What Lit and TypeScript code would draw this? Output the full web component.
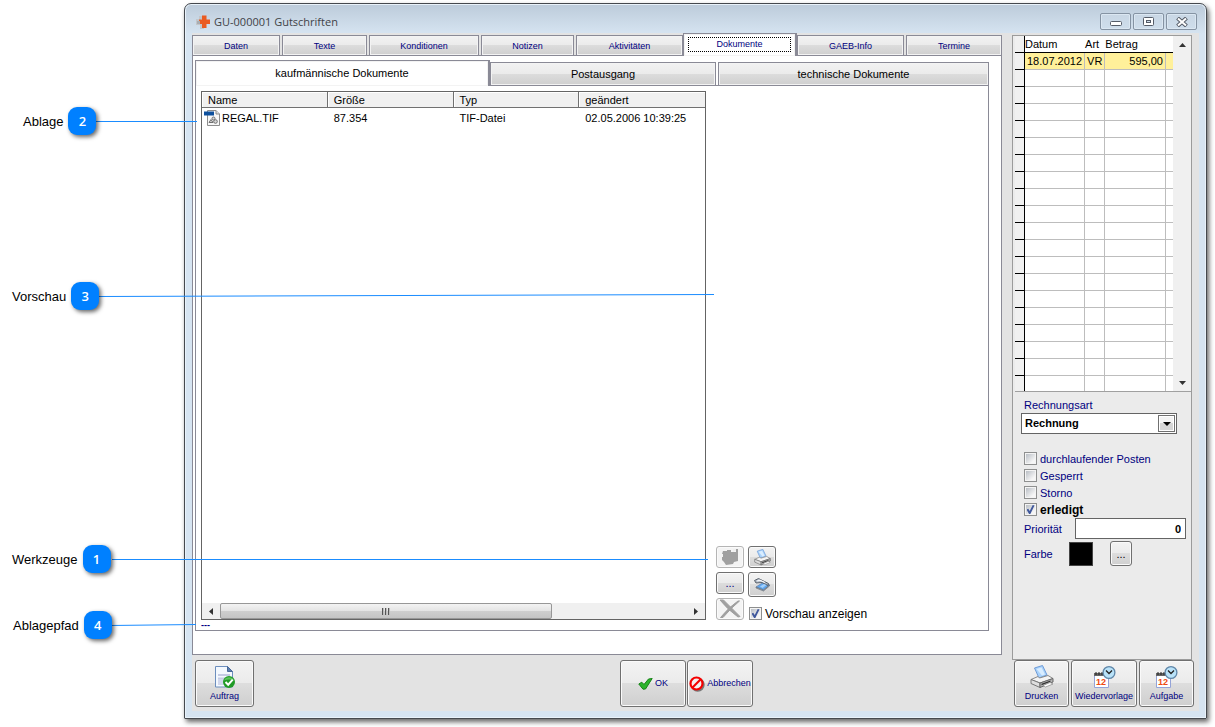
import { LitElement, html, css, svg } from "lit";
import { customElement, state } from "lit/decorators.js";
import { classMap } from "lit/directives/class-map.js";

const logoIcon = html`<svg class="logo" width="16" height="16" viewBox="0 0 16 16" aria-hidden="true">
  <path d="M4 2h5v3H4zM1 5h5v6H1zM5 10h4v5H5z" fill="#c3c6ca" />
  <path d="M7 1.500h4.500v4H15V10h-3.500v4H7v-4H4V5.500h3z" fill="#ea5b22" />
  <path d="M2 7h3v3H2z" fill="#a9adb3" />
</svg>`;

const tifIcon = html`<svg width="16" height="16" viewBox="0 0 16 16" aria-hidden="true">
  <path d="M3.500 .5h8.500l3.500 3.500v11.500h-12z" fill="#f7f7f7" stroke="#8d8d8d" />
  <path d="M12 .5v3.500h3.500" fill="#ddd" stroke="#8d8d8d" />
  <path d="M0 1.500h10v4H0z" fill="#0d4f9c" />
  <g fill="#d6d6d6" stroke="#6e6e6e">
    <path d="M5 12.500l2-3 2 3z" /><circle cx="9.500" cy="8.500" r="1.500" /><circle cx="11.500" cy="11.500" r="1.800" />
  </g>
</svg>`;

const printerShape = svg`
  <path d="M4.500 3l8-2.500 4.500 9.500-8 3z" fill="#a9d2fb" stroke="#6f9bd6" />
  <path d="M6.500 4l5-1.500 3.500 7-3 1z" fill="#d9edff" />
  <path d="M1 14.500l7-3 1.500 1.500 8.500-2.500 5 3-13 4.500z" fill="#f4f4f4" stroke="#8a8a8a" />
  <path d="M1 14.500l9 3.500v4.500l-9-4z" fill="#dedede" stroke="#777" />
  <path d="M10 18l13-4.500v3.500l-13 5.500z" fill="#b5b5b5" stroke="#666" />
  <path d="M11.500 18.700l9-3.200v1.200l-9 3.500z" fill="#333" />
  <path d="M13 20.500l7-3 3 1.500-7.500 3z" fill="#fff" stroke="#888" stroke-width=".7" />`;

const printerIcon = (size: number) =>
  html`<svg width=${size} height=${size} viewBox="0 0 24 24" aria-hidden="true">${printerShape}</svg>`;

const scannerIcon = html`<svg width="18" height="16" viewBox="0 0 18 16" aria-hidden="true">
  <path d="M3 10l7-4.500 6.500 2.500-6 5z" fill="#5ea6ee" stroke="#6e87ad" stroke-width=".8" />
  <path d="M3 10v1l7.500 3 6-5V8l-6 5z" fill="#aab4c0" stroke="#5d6570" stroke-width=".6" />
  <path d="M1.500 3.500l4-2 10 5-.500 2L9 5.500 3 6z" fill="#b4bcc6" stroke="#4c5560" stroke-width=".9" />
  <path d="M4 4l3-.800 5 2.300" fill="none" stroke="#f5f8fc" stroke-width="1.200" />
  <path d="M7 9.500l4-2.500 2.500 1-4 3z" fill="#a5d0fb" />
</svg>`;

const stampIcon = html`<svg width="20" height="18" viewBox="0 0 20 18" aria-hidden="true">
  <path d="M3 3h4v-1h4v2h5V1h2v12l-4 1-1 2-7 1-2-3-2-2V9h1V6H2z" fill="#a0a0a0" /><path d="M13 1h3v2h-2v1h-1z" fill="#f0f0f0" />
</svg>`;

const crossIcon = html`<svg width="22" height="20" viewBox="0 0 22 20" aria-hidden="true">
  <path d="M1 1h3.500q7 7 16.500 16.500l-2 .500Q8 10 1 1zM19 2h1.500Q12 9 4 18.500H1.500Q10 8 19 2z" fill="#a0a0a0" stroke="#a0a0a0" />
</svg>`;

const orderIcon = html`<svg width="22" height="24" viewBox="0 0 22 24" aria-hidden="true">
  <path d="M1.500 1.500h12l5 5v15.500h-17z" fill="#f3f8fe" stroke="#6c8ebd" />
  <path d="M13.500 1.500v5h5z" fill="#5d80b0" stroke="#48699a" />
  <path d="M4 9h12v2H4zM4 12.500h12v1.500H4z" fill="#c4cbe4" /><path d="M4 14h6v6H4z" fill="#d1d7ec" />
  <circle cx="15" cy="17" r="6" fill="#1f9a25" /><path d="M10 15.500a5.500 5.500 0 0 1 10 0q-5-2-10 0z" fill="#5bc45c" />
  <path d="M11.500 17l2.700 2.700 4.500-5" fill="none" stroke="#fff" stroke-width="2" />
</svg>`;

const okIcon = html`<svg width="15" height="12" viewBox="0 0 15 12" aria-hidden="true">
  <path d="M.800 6l3-1.800L6 6.500 10.500 1l3.700-.500L7.500 11 5 11.200z" fill="#2cb42c" stroke="#178317" />
</svg>`;

const cancelIcon = html`<svg width="16" height="16" viewBox="0 0 16 16" aria-hidden="true">
  <circle cx="8.700" cy="8.700" r="6" fill="none" stroke="#777" stroke-width="2" />
  <circle cx="7.500" cy="7.500" r="6" fill="#f4eeee" stroke="#f40000" stroke-width="2.200" />
  <path d="M3.500 11.500l8-8" stroke="#f40000" stroke-width="2.200" />
</svg>`;

const reminderIcon = html`<svg width="23" height="24" viewBox="0 0 23 24" aria-hidden="true">
  <path d="M1.500 9.500h14v13h-14z" fill="#fff" stroke="#94a3d8" />
  <path d="M1 8h15v3H1z" fill="#666" /><path d="M3 7v3M6 7v3M9 7v3M12 7v3" stroke="#222" />
  <text x="3" y="19.500" class="day">12</text>
  <circle cx="16" cy="7.500" r="5.900" fill="#b9e2f8" stroke="#5f86a8" stroke-width="1.300" />
  <path d="M13 5.500l3 3 3-3" fill="none" stroke="#222" stroke-width="1.300" />
</svg>`;

interface Tab {
  id: string;
  label: string;
}

const mainTabs: Tab[] = [
  { id: "daten", label: "Daten" },
  { id: "texte", label: "Texte" },
  { id: "konditionen", label: "Konditionen" },
  { id: "notizen", label: "Notizen" },
  { id: "aktivitaeten", label: "Aktivitäten" },
  { id: "dokumente", label: "Dokumente" },
  { id: "gaeb", label: "GAEB-Info" },
  { id: "termine", label: "Termine" },
];

const subTabs: Tab[] = [
  { id: "kauf", label: "kaufmännische Dokumente" },
  { id: "post", label: "Postausgang" },
  { id: "tech", label: "technische Dokumente" },
];

const base = css`
  :host {
    display: block;
    box-sizing: border-box;
    font-family: "Liberation Sans", Arial, sans-serif;
    font-size: 11px;
  }
  *, *::before, *::after { box-sizing: border-box; }
  button, input, select { font: inherit; margin: 0; }
  svg { display: block; flex: none; }
  .btn {
    display: flex;
    align-items: center;
    justify-content: center;
    padding: 0;
    border: 1px solid #707070;
    border-radius: 3px;
    color: navy;
    background: linear-gradient(#f3f3f3, #ebebeb 48%, #dddddd 50%, #cfcfcf);
    box-shadow: inset 0 0 0 1px #fafafa;
  }
  .check { display: flex; align-items: center; gap: 3px; }
  .check input {
    appearance: none;
    flex: none;
    width: 13px;
    height: 13px;
    border: 1px solid #8e8f8f;
    padding: 1px;
    background: linear-gradient(135deg, #b9bec5, #f6f6f6 80%) content-box, #f4f4f4;
    display: grid;
    place-items: center;
  }
  .check input:checked::after {
    content: "";
    width: 8px;
    height: 9px;
    background: #40589c;
    clip-path: polygon(0 50%, 22% 42%, 40% 66%, 78% 0, 100% 6%, 48% 100%, 32% 100%);
  }
`;

@customElement("document-list")
class DocumentList extends LitElement {
  static styles = [
    base,
    css`
      :host {
        display: flex;
        flex-direction: column;
        border: 1px solid #646464;
        background: #fff;
        min-width: 0;
      }
      .files { width: 100%; border-collapse: separate; border-spacing: 0; table-layout: fixed; }
      th {
        height: 16px;
        padding: 0 6px;
        font-weight: normal;
        text-align: left;
        background: #f0f0f0;
        border-right: 1px solid #707070;
        border-bottom: 1px solid #707070;
        box-shadow: inset 1px 1px #fff;
      }
      th:last-child { border-right: 0; }
      td { height: 19px; padding: 0 6px; white-space: nowrap; }
      td:first-child { padding-left: 2px; }
      .file { display: flex; align-items: center; gap: 2px; }
      .space { flex: 1; }
      .bar { display: grid; grid-template-columns: 18px 1fr 18px; height: 16px; background: #f0f0f0; }
      .arrow { border: 0; padding: 0; background: none; display: grid; place-items: center; }
      .thumb {
        width: 71%;
        border: 1px solid #979797;
        border-radius: 2px;
        background: linear-gradient(#f3f3f3, #e4e4e4 48%, #cfcfcf 50%, #c4c4c4);
        display: flex;
        justify-content: center;
        align-items: center;
        gap: 1px;
      }
      .grip { width: 2px; height: 7px; border-left: 1px solid #555; background: #bbb; }
    `,
  ];
  render() {
    return html`
      <table class="files">
        <thead><tr><th>Name</th><th>Größe</th><th>Typ</th><th>geändert</th></tr></thead>
        <tbody>
          <tr><td><span class="file">${tifIcon}REGAL.TIF</span></td><td>87.354</td><td>TIF-Datei</td><td>02.05.2006 10:39:25</td></tr>
        </tbody>
      </table>
      <div class="space"></div>
      <div class="bar">
        <button class="arrow" aria-label="nach links"><svg width="4" height="7" viewBox="0 0 4 7"><path d="M4 0v7L0 3.500z" fill="#333" /></svg></button>
        <div class="thumb"><i class="grip"></i><i class="grip"></i><i class="grip"></i></div>
        <button class="arrow" aria-label="nach rechts"><svg width="4" height="7" viewBox="0 0 4 7"><path d="M0 0v7l4-3.500z" fill="#333" /></svg></button>
      </div>
    `;
  }
}

@customElement("side-panel")
class SidePanel extends LitElement {
  static styles = [
    base,
    css`
      :host { border: 1px solid #9b9b9b; background: #ebebeb; padding: 0 0 0 2px; color: navy; }
      .ledger { display: flex; background: #fff; border-bottom: 1px solid #a0a0a0; }
      .grid { flex: 1; border-collapse: separate; border-spacing: 0; table-layout: fixed; color: #000; }
      .mark { width: 10px; }
      .date { width: 59px; }
      .kind { width: 20px; }
      .rest { width: 7px; }
      th, td { height: 17px; padding: 0; white-space: nowrap; line-height: 14px; }
      th { font-weight: normal; text-align: left; border-bottom: 1px solid #000; }
      td { border-right: 1px solid #bdbdbd; border-bottom: 1px solid #bdbdbd; }
      td:last-child { border-right: 0; }
      th:first-child, td:first-child {
        background: #f0f0f0;
        border-right: 1px solid #000;
        border-bottom: 1px solid #000;
      }
      tbody tr:last-child td { border-bottom: 0; height: 15px; }
      .filled td + td { background: #fff09a; padding: 0 2px; }
      .filled td:nth-child(4) { text-align: right; }
      .scroll {
        width: 18px;
        background: #f0f0f0;
        display: flex;
        flex-direction: column;
        justify-content: space-between;
      }
      .scroll button { border: 0; padding: 0; height: 17px; background: none; display: grid; place-items: center; }
      .form { padding: 7px 5px 0 6px; }
      .caption { display: block; line-height: 13px; padding-left: 3px; }
      .pick { position: relative; width: 156px; margin-top: 1px; }
      .pick select {
        appearance: none;
        display: block;
        width: 100%;
        height: 21px;
        border: 1px solid #646464;
        border-radius: 0;
        padding: 0 3px 2px;
        background: #fff;
        font-weight: bold;
        color: #000;
      }
      .drop {
        position: absolute;
        top: 2px;
        right: 2px;
        width: 17px;
        height: 17px;
        border: 1px solid #707070;
        box-shadow: inset 0 0 0 1px #fff;
        background: linear-gradient(#f3f3f3 50%, #d5d5d5 50%);
        display: grid;
        place-items: center;
        pointer-events: none;
      }
      .checks { margin: 16px 0 0 3px; }
      .checks .check { height: 17px; }
      .strong { font-size: 12px; font-weight: bold; color: #000; }
      .row { display: flex; align-items: center; padding-left: 3px; }
      .row label { width: 51px; }
      .row input {
        flex: 1;
        min-width: 0;
        height: 21px;
        border: 1px solid #646464;
        padding: 0 4px;
        text-align: right;
        font-weight: bold;
      }
      .color { margin-top: 2px; }
      .color .name { width: 45px; }
      .swatch { width: 24px; height: 24px; border: 1px solid #444; background: #000; margin-right: 17px; }
      .more { width: 22px; height: 25px; color: #000; }
    `,
  ];
  render() {
    const empty = Array.from({ length: 19 });
    return html`
      <div class="ledger">
        <table class="grid">
          <colgroup><col class="mark" /><col class="date" /><col class="kind" /><col /><col class="rest" /></colgroup>
          <thead><tr><th></th><th>Datum</th><th>Art</th><th>Betrag</th><th></th></tr></thead>
          <tbody>
            <tr class="filled"><td></td><td>18.07.2012</td><td>VR</td><td>595,00</td><td></td></tr>
            ${empty.map(() => html`<tr><td></td><td></td><td></td><td></td><td></td></tr>`)}
          </tbody>
        </table>
        <div class="scroll">
          <button aria-label="nach oben"><svg width="7" height="4" viewBox="0 0 7 4"><path d="M0 4h7L3.500 0z" fill="#333" /></svg></button>
          <button aria-label="nach unten"><svg width="7" height="4" viewBox="0 0 7 4"><path d="M0 0h7L3.500 4z" fill="#333" /></svg></button>
        </div>
      </div>
      <div class="form">
        <label class="caption" for="kind">Rechnungsart</label>
        <div class="pick">
          <select id="kind"><option>Rechnung</option></select>
          <span class="drop"><svg width="8" height="4" viewBox="0 0 8 4"><path d="M0 0h8L4 4z" /></svg></span>
        </div>
        <div class="checks">
          <label class="check"><input type="checkbox" />durchlaufender Posten</label>
          <label class="check"><input type="checkbox" />Gesperrt</label>
          <label class="check"><input type="checkbox" />Storno</label>
          <label class="check strong"><input type="checkbox" checked />erledigt</label>
        </div>
        <div class="row"><label for="prio">Priorität</label><input id="prio" value="0" /></div>
        <div class="row color">
          <label class="name" for="farbe">Farbe</label><span class="swatch"></span>
          <button class="btn more" id="farbe">...</button>
        </div>
      </div>
    `;
  }
}

@customElement("app-root")
class AppRoot extends LitElement {
  @state() tab = "dokumente";
  @state() sub = "kauf";

  static styles = [
    base,
    css`
      :host { position: relative; min-height: 100vh; padding: 3px 8px 8px 184px; background: #fff; display: flex; }
      .window {
        flex: 1;
        min-width: 0;
        display: flex;
        flex-direction: column;
        border: 1px solid #45494e;
        border-radius: 7px 7px 1px 1px;
        padding: 0 7px 7px;
        background: linear-gradient(#bccbda, #d6e4f1 30px);
        box-shadow: inset 0 0 0 1px #e9f2fa, 2px 3px 5px rgba(0, 0, 0, 0.6);
      }
      .titlebar { height: 29px; display: flex; align-items: center; gap: 3px; padding: 6px 2px 0 3px; }
      .title { flex: 1; margin: 0; font: 11px "Open Sans", "Noto Sans", sans-serif; color: #3f4247; }
      .controls { display: flex; gap: 2px; }
      .controls button {
        width: 31px;
        height: 17px;
        padding: 0;
        display: grid;
        place-items: center;
        border: 1px solid #8593a3;
        border-radius: 2px;
        background: linear-gradient(#c8d6e4, #cfdeec);
        box-shadow: inset 0 0 0 1px #dbe7f2;
      }
      .client { flex: 1; display: grid; grid-template-columns: minmax(0, 1fr) 187px; column-gap: 10px; background: #e3e3e3; }
      .main, .side { display: flex; flex-direction: column; min-width: 0; }
      .tabs {
        display: grid;
        align-items: end;
        column-gap: 2px;
        height: 22px;
        grid-template-columns: 88fr 85fr 110fr 93fr 107fr 110fr 107fr 96fr;
      }
      .tab {
        height: 20px;
        padding: 0;
        border: 1px solid #8a8a96;
        border-bottom: 0;
        border-radius: 0;
        font-size: 9px;
        color: navy;
        background: linear-gradient(#f2f2f2, #ebebeb 48%, #dcdcdc 50%, #cfcfcf);
        box-shadow: inset 0 0 0 1px #f3f3f3;
      }
      .tab.active {
        position: relative;
        z-index: 1;
        height: 23px;
        margin: 0 -2px -1px;
        padding: 3px 4px 4px;
        background: #fff;
        border-width: 1px 2px 0 1px;
      }
      .focus { display: block; height: 15px; line-height: 13px; border: 1px dotted #000; }
      .page {
        flex: 1;
        display: flex;
        flex-direction: column;
        border: 1px solid #8a8a96;
        background: #fff;
        padding: 4px 12px 23px 2px;
        margin-bottom: 1px;
      }
      .subtabs {
        display: grid;
        align-items: end;
        height: 25px;
        column-gap: 2px;
        grid-template-columns: 293fr 226fr 271fr;
      }
      .subtabs .tab { height: 23px; font-size: 11px; color: #000; }
      .subtabs .tab.active { height: 26px; margin: 0 -2px -1px 0; padding: 0 0 2px; }
      .sheet {
        flex: 1;
        border: 1px solid #8a8a96;
        padding: 5px 0 0 5px;
        display: grid;
        grid-template-columns: minmax(0, 505fr) minmax(0, 272fr);
        grid-template-rows: 1fr 10px;
        column-gap: 10px;
      }
      .path { color: navy; line-height: 11px; font-size: 9px; font-weight: bold; }
      .preview { display: flex; flex-direction: column; justify-content: flex-end; }
      .tools { display: grid; grid-template-columns: 28px auto; gap: 4px; grid-auto-rows: 22px; justify-content: start; }
      .tool { width: 28px; height: 22px; }
      .tool.tall { height: 25px; }
      .tool:disabled { border-color: #b5b5b5; background: #f4f4f4; }
      .show { font-size: 12px; padding: 9px 0 0 1px; }
      .footer { display: flex; padding: 4px 0 4px 3px; }
      .gap-a { flex: 366; }
      .gap-b { flex: 249; }
      .big { height: 47px; font-size: 9px; line-height: 11px; }
      .stack { flex-direction: column; gap: 2px; }
      .order { width: 59px; }
      .pair { display: flex; gap: 1px; }
      .pair .big { width: 66px; gap: 2px; }
      .side-body { flex: 1; margin: 2px 7px 0 0; }
      .actions { display: grid; grid-template-columns: 55fr 66fr 55fr; gap: 2px; padding: 0 5px 4px 2px; }
      .day { font: bold 9px "Liberation Sans", sans-serif; fill: #ee4a12; }
      .callouts { position: absolute; inset: 0; pointer-events: none; font-size: 13px; }
      .callouts svg { position: absolute; left: 0; top: 0; width: 100%; height: 100%; }
      .callout { position: absolute; display: flex; align-items: center; gap: 5px; height: 28px; }
      .c1 { left: 12px; top: 545px; }
      .c2 { left: 23px; top: 107px; }
      .c3 { left: 12px; top: 282px; }
      .c4 { left: 13px; top: 611px; }
      .num {
        width: 28px;
        height: 28px;
        border-radius: 9px;
        background: #0080ff;
        color: #fff;
        font: 600 13px/28px "Open Sans", "Noto Sans", sans-serif;
        text-align: center;
        box-shadow: 2px 2px 4px rgba(0, 0, 0, 0.6);
      }
    `,
  ];

  renderTab(t: Tab, active: string, pick: (id: string) => void, focus = false) {
    const on = t.id === active;
    return html`<button role="tab" aria-selected=${on} class=${classMap({ tab: true, active: on })} @click=${() => pick(t.id)}>
      ${on && focus ? html`<span class="focus">${t.label}</span>` : t.label}
    </button>`;
  }

  render() {
    return html`
      <div class="window">
        <header class="titlebar">
          ${logoIcon}
          <h1 class="title">GU-000001 Gutschriften</h1>
          <div class="controls">
            <button aria-label="Minimieren"><svg width="12" height="11" viewBox="0 0 12 11"><rect x=".5" y="5.500" width="11" height="4" rx="1" fill="#fff" stroke="#555c68" /></svg></button>
            <button aria-label="Maximieren"><svg width="11" height="9" viewBox="0 0 11 9"><rect x=".5" y=".5" width="10" height="8" rx="1" fill="#fff" stroke="#555c68" /><rect x="3.500" y="3.500" width="4" height="2" fill="#cfdeec" stroke="#555c68" /></svg></button>
            <button aria-label="Schließen"><svg width="12" height="10" viewBox="0 0 12 10"><path d="M1.500 1l9 8M10.500 1l-9 8" stroke="#555c68" stroke-width="4" /><path d="M2 1.400l8 7.200M10 1.400L2 8.600" stroke="#fff" stroke-width="2" /></svg></button>
          </div>
        </header>
        <div class="client">
          <main class="main">
            <div class="tabs" role="tablist">${mainTabs.map((t) => this.renderTab(t, this.tab, (id) => (this.tab = id), true))}</div>
            <section class="page">
              <div class="subtabs" role="tablist">${subTabs.map((t) => this.renderTab(t, this.sub, (id) => (this.sub = id)))}</div>
              <div class="sheet">
                <document-list></document-list>
                <div class="preview">
                  <div class="tools">
                    <button class="btn tool" disabled aria-label="Ablegen">${stampIcon}</button>
                    <button class="btn tool" aria-label="Drucken">${printerIcon(17)}</button>
                    <button class="btn tool">...</button>
                    <button class="btn tool tall" aria-label="Scannen">${scannerIcon}</button>
                    <button class="btn tool" disabled aria-label="Löschen">${crossIcon}</button>
                    <label class="check show"><input type="checkbox" checked />Vorschau anzeigen</label>
                  </div>
                </div>
                <div class="path">---</div>
              </div>
            </section>
            <footer class="footer">
              <button class="btn big stack order">${orderIcon}Auftrag</button>
              <span class="gap-a"></span>
              <div class="pair">
                <button class="btn big">${okIcon}OK</button>
                <button class="btn big">${cancelIcon}Abbrechen</button>
              </div>
              <span class="gap-b"></span>
            </footer>
          </main>
          <aside class="side">
            <side-panel class="side-body"></side-panel>
            <div class="actions">
              <button class="btn big stack">${printerIcon(24)}Drucken</button>
              <button class="btn big stack">${reminderIcon}Wiedervorlage</button>
              <button class="btn big stack">${reminderIcon}Aufgabe</button>
            </div>
          </aside>
        </div>
      </div>
      <div class="callouts">
        <svg aria-hidden="true" fill="none" stroke="#1a8cff">
          <path d="M112 559.500H708M96 121.500H197M99 296.500L714 294.500M110 625.500L196 624.500" />
        </svg>
        <div class="callout c2">Ablage<span class="num">2</span></div>
        <div class="callout c3">Vorschau<span class="num">3</span></div>
        <div class="callout c1">Werkzeuge<span class="num">1</span></div>
        <div class="callout c4">Ablagepfad<span class="num">4</span></div>
      </div>
    `;
  }
}
